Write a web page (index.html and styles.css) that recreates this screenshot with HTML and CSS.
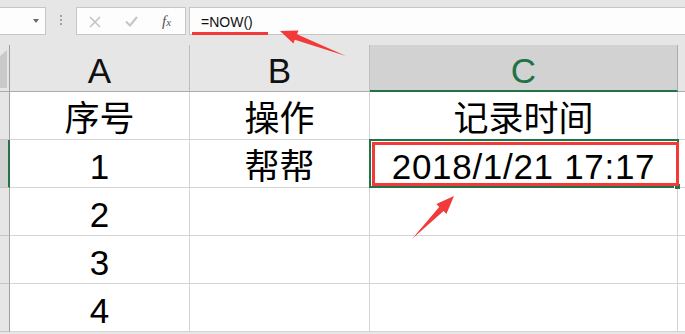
FILE: index.html
```html
<!DOCTYPE html>
<html lang="zh-CN">
<head>
<meta charset="utf-8">
<title>NOW</title>
<link rel="stylesheet" href="styles.css">
</head>
<body>
<div class="app">
  <div class="toolbar">
    <div class="namebox"><span class="caret"></span></div>
    <div class="grip"><i></i><i></i><i></i></div>
    <div class="btns">
      <svg class="ico-x" width="12" height="12" viewBox="0 0 12 12"><path d="M1 1 L11 11 M11 1 L1 11" stroke="#c4c4c4" stroke-width="1.6" fill="none"/></svg>
      <svg class="ico-check" width="13" height="11" viewBox="0 0 13 11"><path d="M1 5.5 L5 9.5 L12 1" stroke="#c4c4c4" stroke-width="2" fill="none"/></svg>
      <span class="fx"><i>f</i><i class="fx-x">x</i></span>
    </div>
    <div class="formula"><span class="ftext">=NOW()</span><span class="uline"></span></div>
  </div>
  <div class="sheet">
    <div class="corner"></div>
    <div class="ch">A</div>
    <div class="ch">B</div>
    <div class="ch sel">C</div>
    <div class="ch end"></div>

    <div class="rh"></div>
    <div class="cell">序号</div>
    <div class="cell">操作</div>
    <div class="cell">记录时间</div>
    <div class="cell end"></div>

    <div class="rh sel"></div>
    <div class="cell">1</div>
    <div class="cell">帮帮</div>
    <div class="cell active"><span class="date">2018/1/21 17:17</span><span class="selbox"><span class="handle"></span></span><span class="redbox"></span></div>
    <div class="cell end"></div>

    <div class="rh"></div>
    <div class="cell">2</div>
    <div class="cell"></div>
    <div class="cell"></div>
    <div class="cell end"></div>

    <div class="rh"></div>
    <div class="cell">3</div>
    <div class="cell"></div>
    <div class="cell"></div>
    <div class="cell end"></div>

    <div class="rh"></div>
    <div class="cell">4</div>
    <div class="cell"></div>
    <div class="cell"></div>
    <div class="cell end"></div>
  </div>
  <svg class="arrows" width="685" height="334" viewBox="0 0 685 334">
    <polygon points="280,31 298.5,30.5 297,34.2 346,56 294.8,39.8 293.4,43.5" fill="#f23a3a"/>
    <polygon points="454,196 446.4,213.9 443.6,211.1 412,239 439.2,206.9 436.4,204.1" fill="#f23a3a"/>
  </svg>
</div>
</body>
</html>
```
FILE: styles.css
```css
html, body {
  margin: 0;
  padding: 0;
}
body {
  background: #e6e6e6;
  font-family: "Liberation Sans", "Noto Sans CJK SC", sans-serif;
  overflow: hidden;
}
.app {
  position: relative;
  width: 685px;
  height: 334px;
  overflow: hidden;
}
.toolbar {
  height: 45px;
  box-sizing: border-box;
  padding-top: 7px;
  display: flex;
  align-items: flex-start;
}
.namebox {
  width: 48px;
  height: 28px;
  margin-left: -2px;
  box-sizing: border-box;
  background: #fdfdfd;
  border: 1px solid #c6c6c6;
  display: flex;
  align-items: center;
  justify-content: flex-end;
  padding-right: 6px;
}
.caret {
  width: 0;
  height: 0;
  border-left: 3.5px solid transparent;
  border-right: 3.5px solid transparent;
  border-top: 4px solid #6a6a6a;
  margin-top: -1px;
}
.grip {
  width: 30px;
  padding-left: 14px;
  box-sizing: border-box;
  padding-top: 8px;
  display: flex;
  flex-direction: column;
  gap: 2px;
}
.grip i {
  display: block;
  width: 2px;
  height: 2px;
  background: #a3a3a3;
}
.btns {
  width: 110px;
  height: 28px;
  box-sizing: border-box;
  background: #fdfdfd;
  border: 1px solid #c6c6c6;
  display: flex;
  align-items: center;
  padding-left: 12px;
  gap: 24px;
}
.ico-x { margin-top: 1px; }
.ico-check { margin-top: 1px; }
.fx {
  font-family: "Liberation Serif", serif;
  color: #555;
  font-size: 15px;
  line-height: 15px;
  margin-top: 1px;
}
.fx-x {
  font-size: 11px;
}
.formula {
  flex: 1;
  margin-left: 3px;
  margin-right: -2px;
  height: 28px;
  box-sizing: border-box;
  background: #fdfdfd;
  border: 1px solid #c6c6c6;
  position: relative;
  padding-left: 11px;
  padding-top: 2px;
  font-size: 14px;
  line-height: 24px;
  color: #111;
}
.uline {
  position: absolute;
  left: 2px;
  bottom: -1px;
  width: 76px;
  height: 3px;
  background: #f23a3a;
}
.sheet {
  display: grid;
  grid-template-columns: 10px 180px 180px 308px 1fr;
  grid-template-rows: 47px repeat(5, 48px);
}
.corner {
  background: #e6e6e6;
  border-right: 1px solid #9f9f9f;
  border-bottom: 1px solid #ababab;
  box-sizing: border-box;
  position: relative;
}
.corner::after {
  content: "";
  position: absolute;
  left: 0;
  top: 5px;
  width: 7px;
  height: 38px;
  background: #c9c9c9;
  clip-path: polygon(100% 0, 100% 100%, 0 100%, 0 16%);
}
.ch {
  background: #e6e6e6;
  border-right: 1px solid #bdbdbd;
  border-bottom: 1px solid #ababab;
  box-sizing: border-box;
  display: flex;
  align-items: flex-end;
  justify-content: center;
  font-size: 35px;
  line-height: 35px;
  padding-bottom: 3px;
  color: #111;
}
.ch.sel {
  background: #d2d2d2;
  color: #217346;
  border-bottom: 2px solid #217346;
  border-right-color: #ababab;
  padding-bottom: 2px;
}
.ch.end { border-right: none; }
.rh {
  background: #e6e6e6;
  border-right: 1px solid #9f9f9f;
  border-bottom: 1px solid #c4c4c4;
  box-sizing: border-box;
}
.rh.sel {
  background: #d2d2d2;
  border-right: 2px solid #217346;
}
.cell {
  background: #fff;
  border-right: 1px solid #d4d4d4;
  border-bottom: 1px solid #d4d4d4;
  box-sizing: border-box;
  display: flex;
  align-items: flex-end;
  justify-content: center;
  font-size: 35px;
  line-height: 35px;
  padding-bottom: 3px;
  color: #000;
}
.cell.end { border-right: none; }
.cell.active { position: relative; }
.date { letter-spacing: 0.7px; }
.selbox {
  position: absolute;
  left: -1px;
  top: -1px;
  width: 310px;
  height: 49px;
  box-sizing: border-box;
  border: 2px solid #217346;
}
.handle {
  position: absolute;
  right: -3px;
  bottom: -3px;
  width: 5px;
  height: 5px;
  background: #217346;
  border-left: 1px solid #fff;
  border-top: 1px solid #fff;
}
.redbox {
  position: absolute;
  left: 2px;
  top: 2px;
  width: 307px;
  height: 44px;
  box-sizing: border-box;
  border: 3px solid #f23a3a;
}
.arrows {
  position: absolute;
  left: 0;
  top: 0;
  pointer-events: none;
}
```
